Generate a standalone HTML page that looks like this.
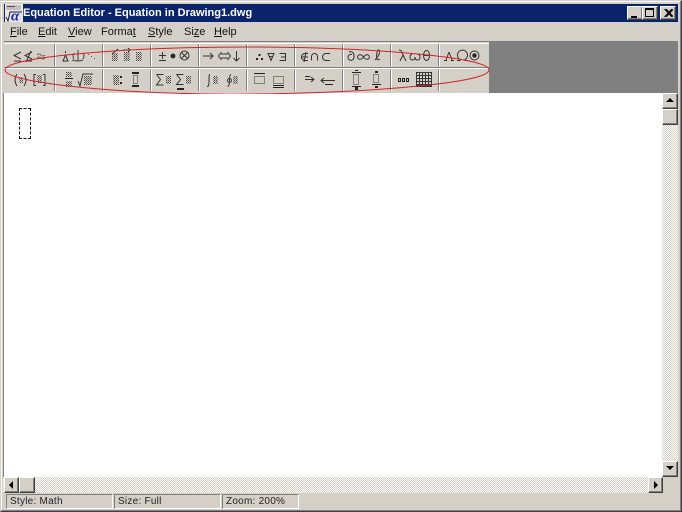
<!DOCTYPE html>
<html><head><meta charset="utf-8"><style>
html,body{margin:0;padding:0;width:682px;height:512px;overflow:hidden;background:#d4d0c8;font-family:"Liberation Sans",sans-serif}
.a{position:absolute}
.menu{position:absolute;top:25px;font-size:11px;color:#111;line-height:14px}
.menu u{text-decoration:underline}
.btn{position:absolute;background:#d4d0c8;border:1px solid;border-color:#fff #404040 #404040 #fff;box-sizing:border-box;box-shadow:inset -1px -1px 0 #808080}
.dith{background-color:#fff;background-image:linear-gradient(45deg,#d4d0c8 25%,transparent 25%,transparent 75%,#d4d0c8 75%),linear-gradient(45deg,#d4d0c8 25%,transparent 25%,transparent 75%,#d4d0c8 75%);background-size:2px 2px;background-position:0 0,1px 1px}
.st{position:absolute;top:494px;height:15px;box-sizing:border-box;border:1px solid;border-color:#808080 #fff #fff #808080;font-size:10px;line-height:14px;padding-left:3px;color:#222;letter-spacing:.25px}
</style></head><body>
<div class="a" style="left:0;top:0;width:682px;height:512px;box-sizing:border-box;border:1px solid;border-color:#d4d0c8 #404040 #404040 #d4d0c8"></div>
<div class="a" style="left:1px;top:1px;width:680px;height:1px;background:#fff"></div>
<div class="a" style="left:1px;top:1px;width:1px;height:510px;background:#fff"></div>
<div class="a" style="left:1px;top:510px;width:680px;height:1px;background:#808080"></div>
<div class="a" style="left:680px;top:1px;width:1px;height:510px;background:#808080"></div>

<div class="a" style="left:4px;top:4px;width:674px;height:18px;background:#0a246a"></div>
<div class="a" style="left:23px;top:4px;height:18px;line-height:18px;font-size:11px;font-weight:bold;color:#fff;white-space:nowrap">Equation Editor - Equation in Drawing1.dwg</div>
<svg class="a" style="left:5px;top:4px" width="18" height="18" viewBox="0 0 18 18">
<rect x="0" y="0" width="18" height="18" fill="#ece9d8"/><rect x="1" y="1" width="15" height="5" fill="#c4bcc0"/><rect x="2" y="2" width="8" height="1" fill="#555"/>
<rect x="4" y="7" width="13" height="10" fill="#dfe4f4"/>
<path d="M1 13l2 4 2-9h12" fill="none" stroke="#223" stroke-width="1"/>
<text x="6" y="16.500" font-family="Liberation Serif" font-size="15" font-style="italic" font-weight="bold" fill="#1a2a9a">α</text>
</svg>
<div class="btn" style="left:627px;top:6px;width:16px;height:14px"><div class="a" style="left:3px;top:9px;width:6px;height:2px;background:#000"></div></div>
<div class="btn" style="left:642px;top:6px;width:16px;height:14px"><div class="a" style="left:2px;top:1px;width:9px;height:9px;box-sizing:border-box;border:1px solid #000;border-top-width:2px"></div></div>
<div class="btn" style="left:660px;top:6px;width:16px;height:14px"><svg class="a" style="left:3px;top:2px" width="9" height="8" viewBox="0 0 9 8"><path d="M0.500 0L8 8M2 0L9.500 8M8 0L0.500 8M9.500 0L2 8" stroke="#000" stroke-width="1"/></svg></div>

<div class="menu" style="left:10px"><u>F</u>ile</div>
<div class="menu" style="left:38px"><u>E</u>dit</div>
<div class="menu" style="left:68px"><u>V</u>iew</div>
<div class="menu" style="left:101px">Forma<u>t</u></div>
<div class="menu" style="left:148px"><u>S</u>tyle</div>
<div class="menu" style="left:184px">Si<u>z</u>e</div>
<div class="menu" style="left:214px"><u>H</u>elp</div>

<div class="a" style="left:4px;top:41px;width:674px;height:1px;background:#808080"></div>
<div class="a" style="left:489px;top:42px;width:189px;height:51px;background:#808080"></div>

<div class="a" style="left:3px;top:93px;width:659px;height:384px;background:#fff"></div>
<div class="a" style="left:3px;top:93px;width:1px;height:384px;background:#808080"></div>

<svg class="a" style="left:0;top:42px" width="490" height="52" viewBox="0 42 490 52">
<defs><pattern id="p" width="2" height="2" patternUnits="userSpaceOnUse"><rect width="1" height="1" fill="#444"/><rect x="1" y="1" width="1" height="1" fill="#777"/></pattern></defs>
<rect x="4" y="67" width="485" height="1" fill="#808080"/>
<rect x="4" y="68" width="485" height="1" fill="#fff"/>
<rect x="4" y="43" width="485" height="1" fill="#fff"/>
<g fill="#808080">
<path d="M54 44h1v22h-1zM54 69h1v22h-1zM102 44h1v22h-1zM102 69h1v22h-1zM150 44h1v22h-1zM150 69h1v22h-1zM198 44h1v22h-1zM198 69h1v22h-1zM246 44h1v22h-1zM246 69h1v22h-1zM294 44h1v22h-1zM294 69h1v22h-1zM342 44h1v22h-1zM342 69h1v22h-1zM390 44h1v22h-1zM390 69h1v22h-1zM438 44h1v22h-1zM438 69h1v22h-1z"/>
</g>
<g fill="#fff">
<path d="M55 44h1v22h-1zM55 69h1v22h-1zM103 44h1v22h-1zM103 69h1v22h-1zM151 44h1v22h-1zM151 69h1v22h-1zM199 44h1v22h-1zM199 69h1v22h-1zM247 44h1v22h-1zM247 69h1v22h-1zM295 44h1v22h-1zM295 69h1v22h-1zM343 44h1v22h-1zM343 69h1v22h-1zM391 44h1v22h-1zM391 69h1v22h-1zM439 44h1v22h-1zM439 69h1v22h-1z"/>
</g>

<!-- dotted fills -->
<g fill="url(#p)">
<rect x="112" y="53" width="6" height="8"/><rect x="124" y="52" width="6" height="9"/><rect x="136" y="52" width="6" height="9"/>
<rect x="19" y="77" width="4" height="6"/><rect x="37" y="75" width="5" height="8"/>
<rect x="66" y="72" width="6" height="5"/><rect x="66" y="81" width="6" height="6"/>
<rect x="84" y="76" width="8" height="9"/>
<rect x="113" y="75" width="6" height="10"/>
<rect x="166" y="76" width="5" height="8"/><rect x="186" y="76" width="5" height="8"/>
<rect x="213" y="76" width="5" height="8"/><rect x="233" y="76" width="5" height="8"/>
</g>

<g fill="none" stroke="#333" stroke-width="1">
<!-- row 1 -->
<path d="M21 52l-7 3.500 7 3.500M14 61h7"/>
<path d="M32 52l-7 3.500 7 3.500M25 61h7M31 51l-5 11"/>
<path d="M37 55q2-2 4 0t4 0M37 58q2-2 4 0t4 0" stroke="#666"/>
<path d="M63 61l2.500-6 2.500 6zM65.500 51v2"/>
<path d="M74 53q-2 3 0 6M83 53q2 3 0 6M72 60q6 2 11 0M78 50v11" stroke="#444"/>
<path d="M88 54.500h1M91 56.500h1M94 58.500h1" stroke="#555"/>
<path d="M112 54l6-5"/><path d="M123 50h7M128 48l2 2-2 2"/>
<path d="M162.500 52v7M159 55.500h7M159 60.500h7"/>
<circle cx="173" cy="56" r="2" fill="#222"/>
<circle cx="184.500" cy="55.500" r="4.500"/><path d="M181.500 52.500l6 6M187.500 52.500l-6 6"/>
<path d="M203 56h10M210 53l3 3-3 3"/>
<path d="M221 54h7M221 58h7M221.500 52l-3 4 3 4M227.500 52l3 4-3 4"/>
<path d="M236.500 51v10M233.500 58l3 3 3-3"/>
<path d="M268 53.500l3 7 3-7zM269 56.500h4"/>
<path d="M279.500 53.500h6v7h-6M281 57h4.500"/>
<path d="M308 53.500h-3a3.500 3.500 0 0 0 0 7h3M302 57h6M306 52l-2 10"/>
<path d="M311.500 60.500v-4a3 3 0 0 1 6 0v4"/>
<path d="M330 53.500h-4a3.500 3.500 0 0 0 0 7h4"/>
<path d="M349 52a3.500 3.500 0 0 1 5 3v2.500a3 3 0 1 1-2-3"/>
<path d="M361 55a2.300 2.300 0 1 0 0 4c2 0 3-4 5-4a2.300 2.300 0 1 1 0 4c-2 0-3-4-5-4z"/>
<path d="M375 60c3-3 6-8 4-10-2-1-3 5-2 9 0 1 2 1 3 0"/>
<path d="M400 61l3-6M399 50c3 0 3 3 5 7l2 4"/>
<path d="M412 54q-2 1-2 3 0 3 2.500 3t2.500-3q0 3 2.500 3t2.500-3q0-2-2-3"/>
<ellipse cx="426.500" cy="55.500" rx="3" ry="5"/><path d="M423.500 55.500h6"/>
<path d="M449 52l-3 8M449 52l3 8M444 60.500h3M451 60.500h3"/>
<path d="M457 60.500h3v-1a5 5 0 1 1 5 0v1h3"/>
<circle cx="474.500" cy="55.500" r="4.500"/><circle cx="474.500" cy="55.500" r="1.800" fill="#222"/>
<!-- row 2 -->
<path d="M17 74q-4 6 0 12M24 74q4 6 0 12"/>
<path d="M36 74.500h-2v11h2M43 74.500h2v11h-2"/>
<path d="M78 81l2 5 3-12h10"/>
<path d="M156.500 74.500h7M156.500 74.500l4 5-4 5.500h7"/>
<path d="M176.500 74.500h7M176.500 74.500l4 5-4 5h7"/>
<path d="M210 74.500c-1 0-1 2-1 6s0 6-2 6"/>
<path d="M231 74.500c-1 0-1.500 2-1.500 6s-.5 6-2 6"/>
<circle cx="229.500" cy="80.500" r="2"/>
<path d="M305 79.500h9M311 77l3 2.500-3 2.500"/>
<path d="M321 80.500h14M324 78l-3 2.500 3 2.500"/>
<rect x="133.500" y="75.500" width="4" height="8" stroke-dasharray="1 1"/>
<rect x="254.500" y="76.500" width="10" height="7" stroke-dasharray="1 1"/>
<rect x="273.500" y="76.500" width="10" height="7" stroke-dasharray="1 1"/>
<rect x="353.500" y="74.500" width="5" height="10" stroke-dasharray="1 1"/>
<rect x="373.500" y="74.500" width="5" height="8" stroke-dasharray="1 1"/>
</g>

<!-- dots -->
<g fill="#222">
<rect x="256" y="58" width="2" height="2"/><rect x="253" y="58" width="0" height="0"/><rect x="261" y="58" width="2" height="2"/><rect x="258.500" y="54" width="2" height="2"/>
<rect x="65" y="78" width="8" height="1"/>
<rect x="120" y="76" width="2" height="2"/><rect x="120" y="82" width="2" height="2"/>
<rect x="132" y="72" width="7" height="2"/><rect x="132" y="85" width="7" height="2"/>
<rect x="177" y="88" width="7" height="2"/>
<rect x="254" y="73" width="11" height="1"/>
<rect x="273" y="85" width="11" height="1"/><rect x="273" y="87" width="11" height="1"/>
<rect x="305" y="76" width="5" height="1"/><rect x="325" y="84" width="8" height="1"/>
<rect x="352" y="72" width="9" height="1"/><rect x="352" y="86" width="9" height="1"/>
<rect x="355" y="70" width="3" height="1"/><rect x="355" y="87" width="3" height="3"/>
<rect x="372" y="84" width="9" height="1"/><rect x="375" y="86" width="3" height="2"/><rect x="375" y="71" width="3" height="2"/>
<rect x="398" y="78" width="3" height="4" /><rect x="402" y="78" width="3" height="4"/><rect x="406" y="78" width="3" height="4"/>
</g>
<rect x="399" y="79" width="1" height="2" fill="#d4d0c8"/><rect x="403" y="79" width="1" height="2" fill="#d4d0c8"/><rect x="407" y="79" width="1" height="2" fill="#d4d0c8"/>
<path d="M416 72h16v15h-16zM417 73v2h2v-2zM420 73v2h2v-2zM423 73v2h2v-2zM426 73v2h2v-2zM429 73v2h2v-2zM417 76v2h2v-2zM420 76v2h2v-2zM423 76v2h2v-2zM426 76v2h2v-2zM429 76v2h2v-2zM417 79v2h2v-2zM420 79v2h2v-2zM423 79v2h2v-2zM426 79v2h2v-2zM429 79v2h2v-2zM417 82v2h2v-2zM420 82v2h2v-2zM423 82v2h2v-2zM426 82v2h2v-2zM429 82v2h2v-2z" fill="#333" fill-rule="evenodd"/>

<path d="M5 70C5 57 125 47 247 47S489 57 489 70 369 93 247 94 5 83 5 70Z" fill="none" stroke="#d2222a" stroke-width="1"/>
</svg>

<!-- caret box -->
<div class="a" style="left:19px;top:108px;width:12px;height:31px;box-sizing:border-box;border:1px dashed #111"></div>

<!-- scrollbars -->
<div class="a dith" style="left:662px;top:93px;width:16px;height:384px"></div>
<div class="btn" style="left:662px;top:93px;width:16px;height:16px"><div class="a" style="left:3px;top:4px;width:0;height:0;border-left:4px solid transparent;border-right:4px solid transparent;border-bottom:4px solid #000"></div></div>
<div class="btn" style="left:662px;top:109px;width:16px;height:16px"></div>
<div class="btn" style="left:662px;top:461px;width:16px;height:16px"><div class="a" style="left:3px;top:4px;width:0;height:0;border-left:4px solid transparent;border-right:4px solid transparent;border-top:4px solid #000"></div></div>
<div class="a dith" style="left:3px;top:477px;width:659px;height:16px"></div>
<div class="btn" style="left:4px;top:477px;width:15px;height:16px"><div class="a" style="left:4px;top:3px;width:0;height:0;border-top:4px solid transparent;border-bottom:4px solid transparent;border-right:4px solid #000"></div></div>
<div class="btn" style="left:19px;top:477px;width:16px;height:16px"></div>
<div class="btn" style="left:648px;top:477px;width:15px;height:16px"><div class="a" style="left:5px;top:3px;width:0;height:0;border-top:4px solid transparent;border-bottom:4px solid transparent;border-left:4px solid #000"></div></div>

<!-- status -->
<div class="a" style="left:3px;top:493px;width:675px;height:17px;background:#d4d0c8"></div>
<div class="st" style="left:6px;width:107px">Style: Math</div>
<div class="st" style="left:114px;width:107px">Size: Full</div>
<div class="st" style="left:222px;width:77px">Zoom: 200%</div>
</body></html>
